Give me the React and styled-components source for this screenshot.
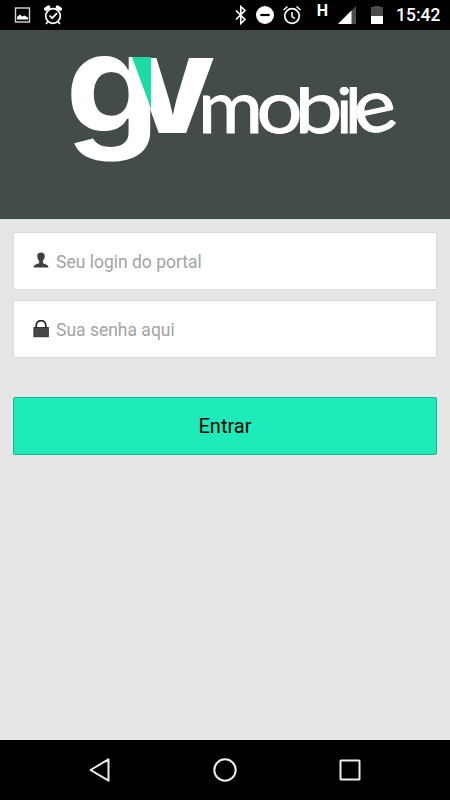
import React from "react";
import styled, { createGlobalStyle } from "styled-components";

const GlobalStyle = createGlobalStyle`
  * {
    box-sizing: border-box;
  }
  body {
    margin: 0;
    background: #e5e5e5;
    font-family: Roboto, sans-serif;
  }
`;

const WordLetter = ({ x, y = 103, width, size = 74, angle = 0, children }) => (
  <text
    transform={`translate(${x} ${y}) rotate(${angle})`}
    fontSize={size}
    textLength={width}
    lengthAdjust="spacingAndGlyphs"
  >
    {children}
  </text>
);

const Logo = () => (
  <LogoSvg width="450" height="189" viewBox="0 0 450 189" aria-label="gv mobile">
    <defs>
      <clipPath id="ascender">
        <rect x="190" y="57" width="220" height="60" />
      </clipPath>
    </defs>
    <text x="65.5" y="102" fontSize="137" fontWeight="700" textLength="94" lengthAdjust="spacingAndGlyphs">
      g
    </text>
    <text x="130" y="103" fontSize="137" fontWeight="800" textLength="85" lengthAdjust="spacingAndGlyphs">
      v
    </text>
    <polygon points="132,27 151,27 151,79" fill="#1bdca5" />
    <Word clipPath="url(#ascender)">
      <WordLetter x={198} width={65}>m</WordLetter>
      <WordLetter x={256.5} width={46}>o</WordLetter>
      <WordLetter x={294.5} width={48}>b</WordLetter>
      <WordLetter x={336.5} width={15.5} size={62}>i</WordLetter>
      <WordLetter x={345} width={16.5}>l</WordLetter>
      <WordLetter x={358} y={106} width={43} angle={-12}>e</WordLetter>
    </Word>
  </LogoSvg>
);

const AlarmIcon = ({ check }) => (
  <svg width="20" height="20" viewBox="0 0 20 20" fill="none" stroke="#fff" strokeWidth="1.7">
    <circle cx="10" cy="11" r="7.3" />
    {check ? (
      <>
        <path d="M6.5 10.5l2.7 2.7 4.8-5M5 16.5l-2 2.5M15 16.5l2 2.5" />
        <path d="M2.8 4l2.7-1.8M17.2 4l-2.7-1.8" strokeWidth="3.6" strokeLinecap="round" />
      </>
    ) : (
      <path d="M10 7v4.5l3 2M1.5 5l4-3.5M18.5 5l-4-3.5" strokeWidth="1.5" />
    )}
  </svg>
);

const StatusIcons = () => (
  <>
    <StatusIcon $left={14}>
      <svg width="17" height="17" viewBox="0 0 17 17">
        <rect x="1.5" y="1" width="14" height="14" fill="none" stroke="#d6d6d0" strokeWidth="1.4" />
        <path d="M3 12.5V10l3-2.5 2 2 2.5-1 3.5 2v2z" fill="#fff" />
      </svg>
    </StatusIcon>
    <StatusIcon $left={12}>
      <AlarmIcon check />
    </StatusIcon>
    <Spacer />
    <StatusIcon>
      <svg width="14" height="20" viewBox="0 0 14 20" fill="none" stroke="#fff" strokeWidth="1.6">
        <path d="M1 5.5l9 9-4.2 4V1.5l4.2 4-9 9" />
      </svg>
    </StatusIcon>
    <StatusIcon $left={7}>
      <svg width="18" height="20" viewBox="0 0 18 20">
        <circle cx="9" cy="10" r="9" fill="#fff" />
        <path d="M4.3 10h9.4" stroke="#000" strokeWidth="2.2" />
      </svg>
    </StatusIcon>
    <StatusIcon $left={8}>
      <AlarmIcon />
    </StatusIcon>
    <Network>H</Network>
    <StatusIcon $left={9}>
      <svg width="20" height="20" viewBox="0 0 20 20">
        <path d="M19 1v18H1z" fill="#4b4b4b" />
        <path d="M14.5 5.5V19H1z" fill="#fff" />
      </svg>
    </StatusIcon>
    <StatusIcon $left={13}>
      <svg width="14" height="20" viewBox="0 0 14 20">
        <path d="M1 2h3V1h6v1h3v9H1z" fill="#4b4b4b" />
        <path d="M1 11h12v8H1z" fill="#fff" />
      </svg>
    </StatusIcon>
    <Clock>15:42</Clock>
  </>
);

const App = () => (
  <>
    <GlobalStyle />
    <Screen>
      <StatusBar>
        <StatusIcons />
      </StatusBar>
      <Header>
        <Logo />
      </Header>
      <Form onSubmit={(e) => e.preventDefault()}>
        <Field>
          <svg width="16" height="18" viewBox="0 0 16 18" fill="#404040">
            <path d="M8 .5c2.6 0 4 1.5 3.7 4-.1 2-.9 3.3-1.8 4.1v2.3c1.1 1.2 5.6 1 5.6 4.6H.5c0-3.6 4.5-3.4 5.6-4.6V8.6C5.2 7.8 4.4 6.5 4.3 4.5 4 2 5.4.5 8 .5z" />
          </svg>
          <Input placeholder="Seu login do portal" />
        </Field>
        <Field>
          <svg width="16" height="18" viewBox="0 0 16 18">
            <path d="M3.2 8V5.5C3.2-1 12.8-1 12.8 5.5V8" fill="none" stroke="#222" strokeWidth="1.7" />
            <rect x=".9" y="7.5" width="14.4" height="9.3" fill="#484848" stroke="#222" strokeWidth=".8" />
          </svg>
          <Input type="password" placeholder="Sua senha aqui" />
        </Field>
        <Submit>Entrar</Submit>
      </Form>
      <NavBar>
        <svg width="26" height="26" viewBox="0 0 26 26">
          <path d="M21.5 2.3v21.4L3.5 13z" />
        </svg>
        <svg width="26" height="26" viewBox="0 0 26 26">
          <circle cx="13" cy="13" r="10.7" />
        </svg>
        <svg width="26" height="26" viewBox="0 0 26 26">
          <rect x="3.5" y="3.5" width="19" height="19" rx=".5" />
        </svg>
      </NavBar>
    </Screen>
  </>
);

const Screen = styled.main`
  display: flex;
  flex-direction: column;
  width: 450px;
  height: 800px;
  background: #e5e5e5;
  overflow: hidden;
`;

const StatusBar = styled.div`
  display: flex;
  align-items: center;
  height: 30px;
  padding-right: 10px;
  background: #000;
  color: #fff;
`;

const StatusIcon = styled.span`
  display: flex;
  margin-left: ${({ $left }) => $left || 0}px;
`;

const Spacer = styled.span`
  flex: 1;
`;

const Network = styled.span`
  align-self: flex-start;
  margin: 3px 0 0 15px;
  font-size: 16px;
  line-height: 16px;
  font-weight: 700;
`;

const Clock = styled.span`
  width: 44px;
  margin-left: 12px;
  font-size: 17.5px;
  font-weight: 500;
  line-height: 32px;
  white-space: nowrap;
`;

const Header = styled.header`
  height: 189px;
  background: #444c49;
  border-bottom: 1px solid #3e4643;
`;

const LogoSvg = styled.svg`
  display: block;
  fill: #fff;
  font-family: Inter, sans-serif;
  overflow: visible;
`;

const Word = styled.g`
  font-family: Lato, sans-serif;
  stroke: #fff;
  stroke-width: 0.9;
`;

const Form = styled.form`
  flex: 1;
  display: flex;
  flex-direction: column;
  padding: 13px 13px 0;
`;

const Field = styled.label`
  display: flex;
  align-items: center;
  height: 58px;
  margin-bottom: 10px;
  padding: 0 19px;
  background: #fff;
  border: 1px solid #dadada;
  border-radius: 1px;
`;

const Input = styled.input`
  flex: 1;
  min-width: 0;
  margin-left: 7px;
  padding: 1px 0 0;
  border: 0;
  outline: 0;
  background: none;
  font: 17.5px Roboto, sans-serif;

  &::placeholder {
    color: #a3a3a3;
  }
`;

const Submit = styled.button`
  height: 58px;
  margin-top: 29px;
  padding: 0;
  background: #1eebb9;
  border: 1px solid #12b890;
  border-radius: 2px;
  color: #000;
  font: 20px Roboto, sans-serif;
`;

const NavBar = styled.nav`
  display: flex;
  justify-content: space-between;
  align-items: center;
  height: 60px;
  padding: 0 87px;
  background: #000;

  svg {
    fill: none;
    stroke: #eee;
    stroke-width: 2;
    stroke-linejoin: round;
  }
`;

export default App;
